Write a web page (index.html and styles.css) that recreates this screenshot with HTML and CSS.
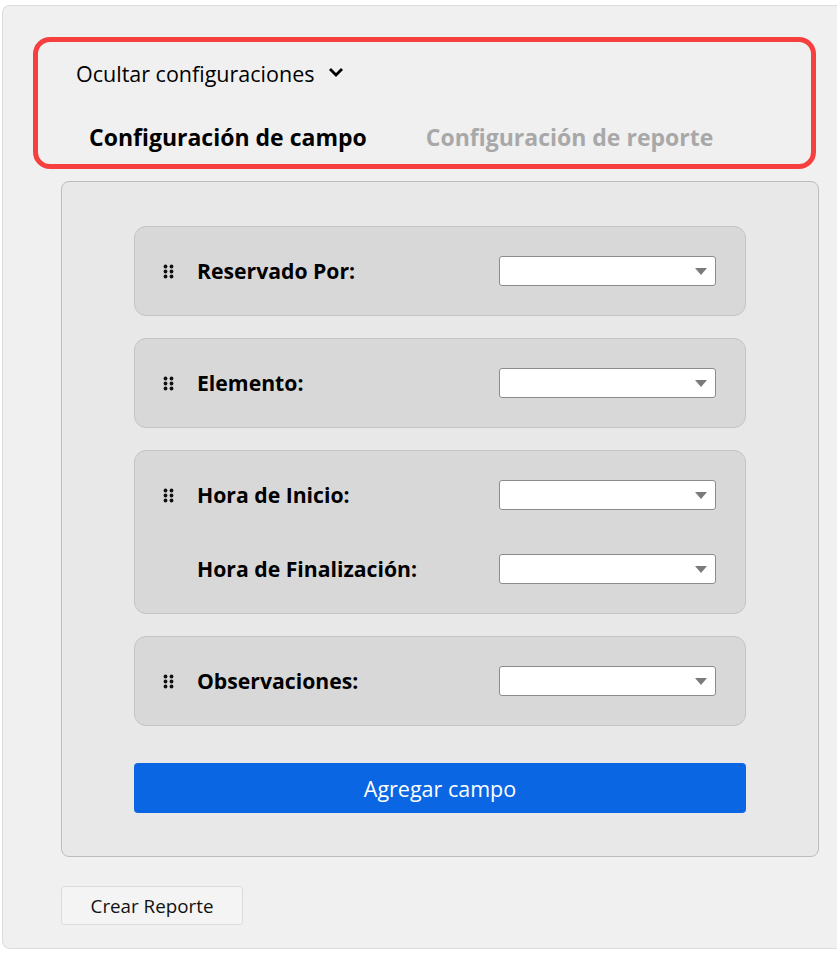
FILE: index.html
```html
<!DOCTYPE html>
<html lang="es">
<head>
    <meta charset="UTF-8">
    <meta name="viewport" content="width=device-width, initial-scale=1.0">
    <title>Crear Reporte</title>
    <link rel="stylesheet" href="styles.css">
</head>
<body>
    <div class="page">
        <div class="settings-box">
            <div class="toggle">
                <span>Ocultar configuraciones</span>
                <svg class="chevron" width="16" height="11" viewBox="0 0 16 11"><path d="M2 2 L8 8 L14 2" fill="none" stroke="#000" stroke-width="2.8"/></svg>
            </div>
            <div class="tabs">
                <div class="tab active">Configuración de campo</div>
                <div class="tab">Configuración de reporte</div>
            </div>
        </div>

        <div class="fields-panel">
            <div class="field-card">
                <div class="field-row">
                    <svg class="grip" width="11" height="15" viewBox="0 0 11 15"><g fill="#111"><circle cx="2.5" cy="2.5" r="1.9"/><circle cx="8.5" cy="2.5" r="1.9"/><circle cx="2.5" cy="7.5" r="1.9"/><circle cx="8.5" cy="7.5" r="1.9"/><circle cx="2.5" cy="12.5" r="1.9"/><circle cx="8.5" cy="12.5" r="1.9"/></g></svg>
                    <span class="field-label">Reservado Por:</span>
                    <div class="select"><span class="arrow"></span></div>
                </div>
            </div>
            <div class="field-card">
                <div class="field-row">
                    <svg class="grip" width="11" height="15" viewBox="0 0 11 15"><g fill="#111"><circle cx="2.5" cy="2.5" r="1.9"/><circle cx="8.5" cy="2.5" r="1.9"/><circle cx="2.5" cy="7.5" r="1.9"/><circle cx="8.5" cy="7.5" r="1.9"/><circle cx="2.5" cy="12.5" r="1.9"/><circle cx="8.5" cy="12.5" r="1.9"/></g></svg>
                    <span class="field-label">Elemento:</span>
                    <div class="select"><span class="arrow"></span></div>
                </div>
            </div>
            <div class="field-card">
                <div class="field-row">
                    <svg class="grip" width="11" height="15" viewBox="0 0 11 15"><g fill="#111"><circle cx="2.5" cy="2.5" r="1.9"/><circle cx="8.5" cy="2.5" r="1.9"/><circle cx="2.5" cy="7.5" r="1.9"/><circle cx="8.5" cy="7.5" r="1.9"/><circle cx="2.5" cy="12.5" r="1.9"/><circle cx="8.5" cy="12.5" r="1.9"/></g></svg>
                    <span class="field-label">Hora de Inicio:</span>
                    <div class="select"><span class="arrow"></span></div>
                </div>
                <div class="field-row">
                    <span class="grip-space"></span>
                    <span class="field-label">Hora de Finalización:</span>
                    <div class="select"><span class="arrow"></span></div>
                </div>
            </div>
            <div class="field-card">
                <div class="field-row">
                    <svg class="grip" width="11" height="15" viewBox="0 0 11 15"><g fill="#111"><circle cx="2.5" cy="2.5" r="1.9"/><circle cx="8.5" cy="2.5" r="1.9"/><circle cx="2.5" cy="7.5" r="1.9"/><circle cx="8.5" cy="7.5" r="1.9"/><circle cx="2.5" cy="12.5" r="1.9"/><circle cx="8.5" cy="12.5" r="1.9"/></g></svg>
                    <span class="field-label">Observaciones:</span>
                    <div class="select"><span class="arrow"></span></div>
                </div>
            </div>
            <button class="add-button">Agregar campo</button>
        </div>

        <button class="create-button">Crear Reporte</button>
    </div>
</body>
</html>
```

FILE: styles.css
```css
body {
    margin: 0;
    background-color: #fff;
    font-family: "Open Sans", sans-serif;
    color: #000;
}
.page {
    margin: 5px 0 0 2px;
    height: 944px;
    box-sizing: border-box;
    background-color: #f0f0f0;
    border: 1px solid #dcdcdc;
    border-right: none;
    border-radius: 8px 0 0 8px;
    padding: 31px 18px 0 30px;
}
.settings-box {
    border: 5px solid #f64040;
    border-radius: 17px;
    height: 132px;
    margin-right: 3px;
    box-sizing: border-box;
    padding: 14px 0 0 38px;
}
.toggle {
    display: flex;
    align-items: center;
    gap: 14px;
    font-size: 21.5px;
    height: 34px;
}
.chevron {
    margin-top: -1px;
}
.tabs {
    display: flex;
    gap: 59px;
    margin-top: 31px;
    padding-left: 13px;
}
.tab {
    font-size: 23px;
    font-weight: 700;
    color: #a8a8a8;
}
.tab.active {
    color: #000;
}
.fields-panel {
    margin: 12px 0 0 28px;
    background-color: #e8e8e8;
    border: 1px solid #bcbcbc;
    border-radius: 8px;
    padding: 44px 72px 43px 72px;
    display: flex;
    flex-direction: column;
    gap: 22px;
}
.field-card {
    background-color: #d8d8d8;
    border: 1px solid #c4c4c4;
    border-radius: 12px;
    padding: 29px 29px 29px 28px;
    display: flex;
    flex-direction: column;
    gap: 44px;
}
.field-row {
    display: flex;
    align-items: center;
    height: 30px;
}
.grip,
.grip-space {
    width: 11px;
    height: 15px;
    margin-right: 23px;
    flex-shrink: 0;
}
.field-label {
    flex: 1;
    font-size: 21.2px;
    font-weight: 700;
    margin-top: -2px;
}
.select {
    width: 217px;
    height: 30px;
    box-sizing: border-box;
    background-color: #fff;
    border: 1px solid #8c8c8c;
    border-radius: 3px;
    display: flex;
    align-items: center;
    justify-content: flex-end;
    padding-right: 8px;
}
.arrow {
    width: 0;
    height: 0;
    border-left: 6px solid transparent;
    border-right: 6px solid transparent;
    border-top: 7px solid #7a7a7a;
}
.add-button {
    margin-top: 15px;
    height: 50px;
    border: none;
    border-radius: 4px;
    background-color: #0b66e4;
    color: #fff;
    font-family: "Open Sans", sans-serif;
    font-size: 21.5px;
    cursor: pointer;
}
.create-button {
    display: block;
    margin: 29px 0 0 28px;
    width: 182px;
    height: 39px;
    background-color: #f4f4f4;
    border: 1px solid #dcdcdc;
    border-radius: 3px;
    font-family: "Open Sans", sans-serif;
    font-size: 18.8px;
    color: #111;
    cursor: pointer;
}
```
